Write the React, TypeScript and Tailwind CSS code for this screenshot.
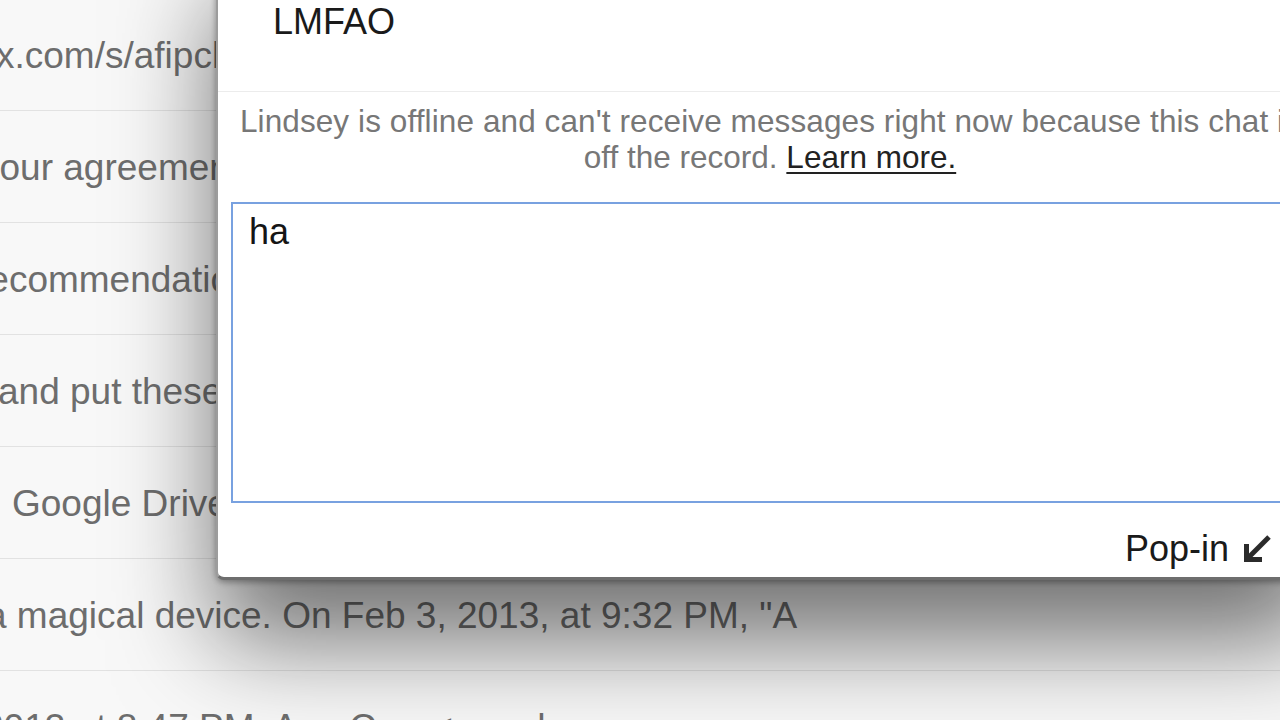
import React from "react";

const rows: { text: string; ml: string }[] = [
  { text: "x.com/s/afipclxq4v7", ml: "ml-[-4px]" },
  { text: "your agreement with", ml: "ml-[-19px]" },
  { text: "recommendations for", ml: "ml-[-24px]" },
  { text: "and put these in", ml: "ml-[-2px]" },
  { text: "Google Drive folder", ml: "ml-[12px]" },
  { text: 'a magical device. On Feb 3, 2013, at 9:32 PM, "A', ml: "ml-[-14px]" },
  { text: "2013 at 8:47 PM, Ann Carr <ann.d", ml: "ml-[-17px]" },
];

function PopInArrow() {
  return (
    <svg width="32" height="32" viewBox="0 0 32 32" className="ml-[12px]">
      <line x1="28" y1="4" x2="8" y2="24" stroke="#2b2b2b" strokeWidth="5" strokeLinecap="butt" />
      <polyline points="5.5,11 5.5,26.5 21,26.5" fill="none" stroke="#2b2b2b" strokeWidth="5" strokeLinejoin="miter" />
    </svg>
  );
}

export default function App() {
  return (
    <div
      className="relative w-[1280px] h-[720px] overflow-hidden bg-[#f8f8f8]"
      style={{ fontFamily: '"Liberation Sans", Arial, Helvetica, sans-serif' }}
    >
      {/* background mail list */}
      <div className="flex flex-col mt-[-1px]">
        {rows.map((r, i) => (
          <div
            key={i}
            className="h-[112px] shrink-0 flex items-center border-b border-[#e2e2e2] overflow-hidden whitespace-nowrap"
          >
            <span className={`${r.ml} mt-[2px] text-[37px] leading-[44px] text-[#6d6d6d]`}>{r.text}</span>
          </div>
        ))}
      </div>

      {/* chat popup */}
      <div className="absolute left-[216px] top-[-60px] w-[1106px] h-[640px] bg-white border-l-2 border-l-[#9c9c9c] border-b-[3px] border-b-[#6e6e6e] rounded-bl-[8px] shadow-[0_60px_100px_rgba(0,0,0,0.55),0_2px_6px_rgba(0,0,0,0.35)] flex flex-col pt-[60px]">
        <div className="h-[92px] border-b border-[#ececec] pl-[55px] pt-[2px]">
          <div className="text-[36px] leading-[40px] text-[#1a1a1a]">LMFAO</div>
        </div>
        <div className="pt-[11px] text-center text-[31.5px] leading-[36px] text-[#777777] whitespace-nowrap">
          <div className="tracking-[0.1px]">Lindsey is offline and can't receive messages right now because this chat is</div>
          <div>
            off the record.{" "}
            <span className="text-[#222222] underline underline-offset-[4px] decoration-[2px]">Learn more.</span>
          </div>
        </div>
        <div className="mt-[27px] ml-[13px] mr-[11px] h-[301px] border-2 border-[#78a1e0] pl-[16px] pt-[8px]">
          <div className="text-[36px] leading-[40px] text-[#151515]">ha</div>
        </div>
        <div className="mt-[26px] flex items-center justify-end pr-[49px]">
          <span className="text-[36px] leading-[40px] text-[#1a1a1a]">Pop-in</span>
          <PopInArrow />
        </div>
      </div>
    </div>
  );
}
